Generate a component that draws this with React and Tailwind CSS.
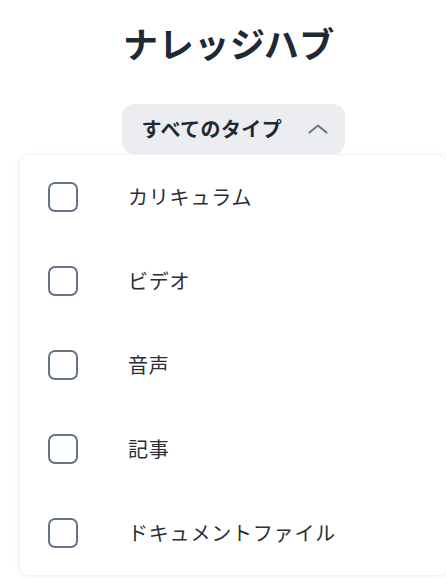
import React, { useState } from "react";

const TYPES = ["カリキュラム", "ビデオ", "音声", "記事", "ドキュメントファイル"];

const font = {
  fontFamily: '"Noto Sans CJK JP", "Noto Sans", sans-serif',
};

const ChevronUp = () => (
  <svg width="20" height="10" viewBox="0 0 20 10" fill="none" className="shrink-0">
    <path
      d="M1.5 8.5 L10 1.5 L18.5 8.5"
      stroke="#6b7280"
      strokeWidth="2"
      strokeLinecap="round"
      strokeLinejoin="round"
    />
  </svg>
);

export default function App() {
  const [checked, setChecked] = useState({});

  return (
    <div className="w-full min-h-[578px] bg-white overflow-hidden" style={font}>
      <div className="w-[466px] flex flex-col items-center">
        <h1 className="pt-[22px] pr-[8px] text-[35px] leading-[42px] font-bold tracking-[0.02em] text-[#1f2933]">
          ナレッジハブ
        </h1>

        <div className="relative mt-[40px] flex flex-col items-center w-full">
          <button className="h-[50px] w-[223px] rounded-[12px] bg-[#ebedf0] flex items-center justify-between pl-[20px] pr-[17px]">
            <span className="text-[20px] font-bold leading-none text-[#1f2933] tracking-[0.02em]">
              すべてのタイプ
            </span>
            <ChevronUp />
          </button>

          <div className="self-stretch ml-[19px] mr-[18px] bg-white rounded-[10px] border border-[#f1f2f4] shadow-[0_2px_10px_rgba(0,0,0,0.04)] flex flex-col">
            {TYPES.map((t) => (
              <label
                key={t}
                className="h-[84px] flex items-center pl-[28px] cursor-pointer"
              >
                <span
                  onClick={() => setChecked((c) => ({ ...c, [t]: !c[t] }))}
                  className="w-[30px] h-[30px] rounded-[7px] border-2 border-[#667384] shrink-0"
                />
                <span className="ml-[50px] text-[20px] leading-none text-[#2a2f36] tracking-[0.04em]">
                  {t}
                </span>
              </label>
            ))}
          </div>
        </div>
      </div>
    </div>
  );
}
